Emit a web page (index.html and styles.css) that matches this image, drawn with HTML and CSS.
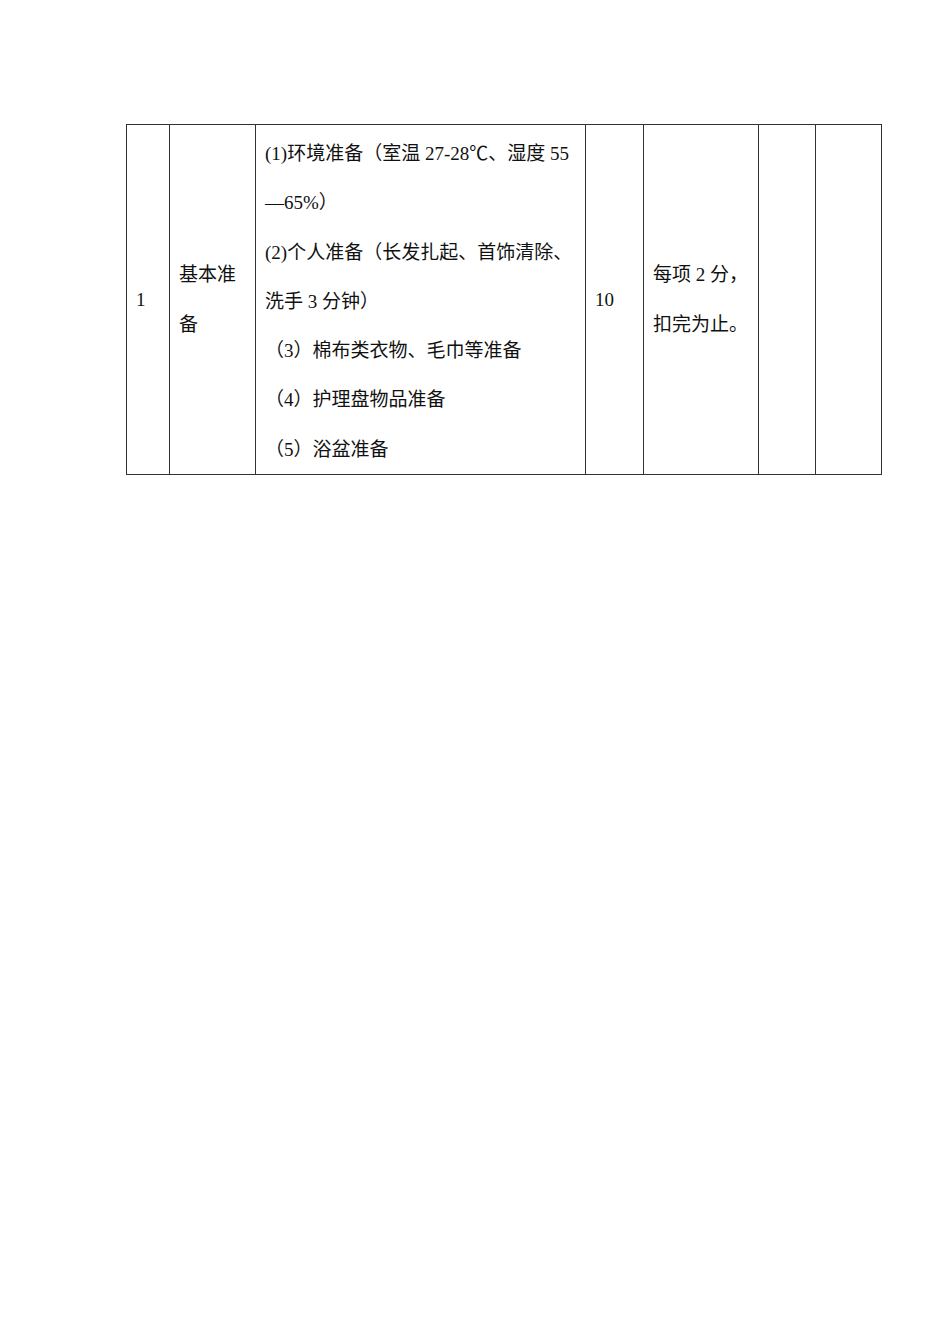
FILE: index.html
```html
<!DOCTYPE html>
<html lang="zh-CN">
<head>
<meta charset="utf-8">
<title>基本准备</title>
<link rel="stylesheet" href="styles.css">
</head>
<body>
<div class="page">
  <table class="grid">
    <colgroup>
      <col class="c1"><col class="c2"><col class="c3"><col class="c4"><col class="c5"><col class="c6"><col class="c7">
    </colgroup>
    <tr>
      <td class="mid">1</td>
      <td class="mid"><div class="ln">基本准</div><div class="ln">备</div></td>
      <td class="content">
        <div class="ln">(1)环境准备（室温 27-28℃、湿度 55</div>
        <div class="ln">—65%）</div>
        <div class="ln">(2)个人准备（长发扎起、首饰清除、</div>
        <div class="ln">洗手 3 分钟）</div>
        <div class="ln">（3）棉布类衣物、毛巾等准备</div>
        <div class="ln">（4）护理盘物品准备</div>
        <div class="ln">（5）浴盆准备</div>
      </td>
      <td class="mid">10</td>
      <td class="mid"><div class="ln">每项 2 分，</div><div class="ln">扣完为止。</div></td>
      <td></td>
      <td></td>
    </tr>
  </table>
</div>
</body>
</html>
```
FILE: styles.css
```css
html, body {
  margin: 0;
  padding: 0;
  background: #ffffff;
}
.page {
  padding: 124px 0 0 126px;
  font-family: "Liberation Serif", "Noto Sans CJK SC", serif;
  font-size: 19px;
  color: #111;
}
.grid {
  border-collapse: collapse;
  table-layout: fixed;
  width: 756px;
}
.c1 { width: 43px; }
.c2 { width: 86px; }
.c3 { width: 330px; }
.c4 { width: 58px; }
.c5 { width: 115px; }
.c6 { width: 57px; }
.c7 { width: 66px; }
.grid td {
  border: 1px solid #333;
  padding: 0 8px 0 9px;
  vertical-align: middle;
}
.grid td.content {
  padding-top: 4px;
  padding-bottom: 0;
  vertical-align: top;
}
.ln {
  line-height: 49.3px;
  white-space: nowrap;
}
.mid {
  line-height: 49.3px;
  padding-top: 3px;
}
.latin {
  font-size: 19.5px;
}
```
